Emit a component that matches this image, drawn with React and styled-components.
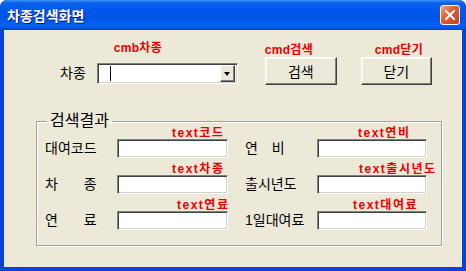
import React from 'react';
import styled, { createGlobalStyle } from 'styled-components';

const GlobalStyle = createGlobalStyle`
	html, body {
		margin: 0;
		padding: 0;
		background: #ffffff;
	}
	body {
		font-family: 'Liberation Sans', 'Noto Sans CJK KR', sans-serif;
	}
`;

const Window = styled.div`
	width: 466px;
	height: 271px;
	display: flex;
	flex-direction: column;
	background: #0843d9;
	border-radius: 7px 7px 0 0;
	overflow: hidden;
`;

const TitleBar = styled.div`
	height: 30px;
	flex: none;
	display: flex;
	align-items: center;
	justify-content: space-between;
	padding: 0 6px 0 7px;
	background: linear-gradient(
		to bottom,
		#3d8ff9 0%,
		#0b60e8 10%,
		#0058ee 30%,
		#0055e5 60%,
		#0060f6 85%,
		#0050dd 95%,
		#0040cf 100%
	);
`;

const Title = styled.span`
	color: #ffffff;
	font-size: 14px;
	font-weight: bold;
	text-shadow: 1px 1px #0a1883;
`;

const CloseButton = styled.div`
	width: 20px;
	height: 20px;
	box-sizing: border-box;
	border: 1px solid #ffffff;
	border-radius: 3px;
	display: flex;
	align-items: center;
	justify-content: center;
	background: linear-gradient(135deg, #f4a58c 0%, #e2603c 40%, #c8411d 100%);
`;

const Client = styled.div`
	flex: 1;
	margin: 0 4px 4px 4px;
	background: #ece9d8;
	display: flex;
	flex-direction: column;
	padding-top: 12px;
`;

const TopRow = styled.div`
	display: flex;
	align-items: flex-end;
	padding-left: 56px;
`;

const Label = styled.span`
	font-size: 14px;
	color: #000000;
	line-height: ${(p) => p.$h || 19}px;
	width: ${(p) => (p.$w ? `${p.$w}px` : 'auto')};
	margin-right: ${(p) => p.$mr || 0}px;
	margin-bottom: ${(p) => p.$mb || 0}px;
	word-spacing: ${(p) => p.$ws || 0}px;
	white-space: pre;
	flex: none;
`;

const Field = styled.div`
	display: flex;
	flex-direction: column;
	width: ${(p) => p.$w}px;
	margin-left: ${(p) => p.$ml || 0}px;
	margin-bottom: ${(p) => p.$mb || 0}px;
	flex: none;
`;

const Note = styled.span`
	font-size: 12px;
	font-weight: bold;
	letter-spacing: ${(p) => p.$ls ?? 1.5}px;
	line-height: 12px;
	height: 12px;
	color: #e80000;
	white-space: nowrap;
	padding-left: ${(p) => p.$left || 0}px;
	margin-bottom: ${(p) => p.$gap || 0}px;
`;

const sunken = `
	box-sizing: border-box;
	background: #ffffff;
	border: 1px solid;
	border-color: #808080 #ffffff #ffffff #808080;
	box-shadow: inset 1px 1px #404040, inset -1px -1px #d4d0c8;
`;

const Combo = styled.div`
	${sunken}
	height: 21px;
	display: flex;
	align-items: center;
	justify-content: space-between;
	padding: 2px;
`;

const Caret = styled.span`
	width: 1px;
	height: 15px;
	background: #000000;
	margin-left: 10px;
`;

const DropButton = styled.div`
	width: 15px;
	height: 17px;
	box-sizing: border-box;
	background: #ece9d8;
	border: 1px solid;
	border-color: #ffffff #404040 #404040 #ffffff;
	box-shadow: inset -1px -1px #808080;
	display: flex;
	align-items: center;
	justify-content: center;
`;

const Arrow = styled.span`
	width: 0;
	height: 0;
	border-left: 3.5px solid transparent;
	border-right: 3.5px solid transparent;
	border-top: 4px solid #000000;
`;

const Button = styled.div`
	height: 28px;
	box-sizing: border-box;
	background: #ece9d8;
	border: 1px solid;
	border-color: #ffffff #404040 #404040 #ffffff;
	box-shadow: inset -1px -1px #808080, inset 1px 1px #f8f7f2;
	display: flex;
	align-items: center;
	justify-content: center;
	font-size: 14px;
	color: #000000;
`;

const Group = styled.fieldset`
	margin: 30px 0 0 32px;
	width: 406px;
	box-sizing: border-box;
	padding: 0 8px 15px 8px;
	border: 1px solid #a0a0a0;
	box-shadow: 1px 1px 0 #ffffff, inset 1px 1px 0 #ffffff;
	display: flex;
	flex-direction: column;
	gap: 5px;
`;

const Legend = styled.legend`
	font-size: 16px;
	line-height: 12px;
	padding: 0 3px;
	margin-left: 2px;
	color: #000000;
`;

const Row = styled.div`
	display: flex;
	align-items: flex-end;
	gap: 17px;
`;

const Pair = styled.div`
	display: flex;
	align-items: flex-end;
`;

const Input = styled.div`
	${sunken}
	height: 19px;
`;

const TextField = ({ note, left, w, label, ws }) => (
	<Pair>
		<Label $w={72} $ws={ws}>
			{label}
		</Label>
		<Field $w={w}>
			<Note $left={left}>{note}</Note>
			<Input />
		</Field>
	</Pair>
);

const rows = [
	[
		{ label: '대여코드', note: 'text코드', left: 55 },
		{ label: '연 비', note: 'text연비', left: 41, ws: 10 },
	],
	[
		{ label: '차 종', note: 'text차종', left: 55, ws: 22 },
		{ label: '출시년도', note: 'text출시년도', left: 42 },
	],
	[
		{ label: '연 료', note: 'text연료', left: 60, ws: 22 },
		{ label: '1일대여료', note: 'text대여료', left: 36 },
	],
];

const App = () => (
	<Window>
		<GlobalStyle />
		<TitleBar>
			<Title>차종검색화면</Title>
			<CloseButton>
				<svg width="10" height="10" viewBox="0 0 10 10">
					<path d="M1 1 L9 9 M9 1 L1 9" stroke="#ffffff" strokeWidth="2" strokeLinecap="square" />
				</svg>
			</CloseButton>
		</TitleBar>
		<Client>
			<TopRow>
				<Label $mr={11} $h={21} $mb={1}>
					차종
				</Label>
				<Field $w={141} $mb={1}>
					<Note $left={17} $gap={9} $ls={0.3}>
						cmb차종
					</Note>
					<Combo>
						<Caret />
						<DropButton>
							<Arrow />
						</DropButton>
					</Combo>
				</Field>
				<Field $w={72} $ml={27}>
					<Note $left={-4} $gap={1} $ls={0.3}>
						cmd검색
					</Note>
					<Button>검색</Button>
				</Field>
				<Field $w={71} $ml={24}>
					<Note $left={14} $gap={1} $ls={0.3}>
						cmd닫기
					</Note>
					<Button>닫기</Button>
				</Field>
			</TopRow>
			<Group>
				<Legend>검색결과</Legend>
				{rows.map(([a, b], i) => (
					<Row key={i}>
						<TextField {...a} w={111} />
						<TextField {...b} w={110} />
					</Row>
				))}
			</Group>
		</Client>
	</Window>
);

export default App;
